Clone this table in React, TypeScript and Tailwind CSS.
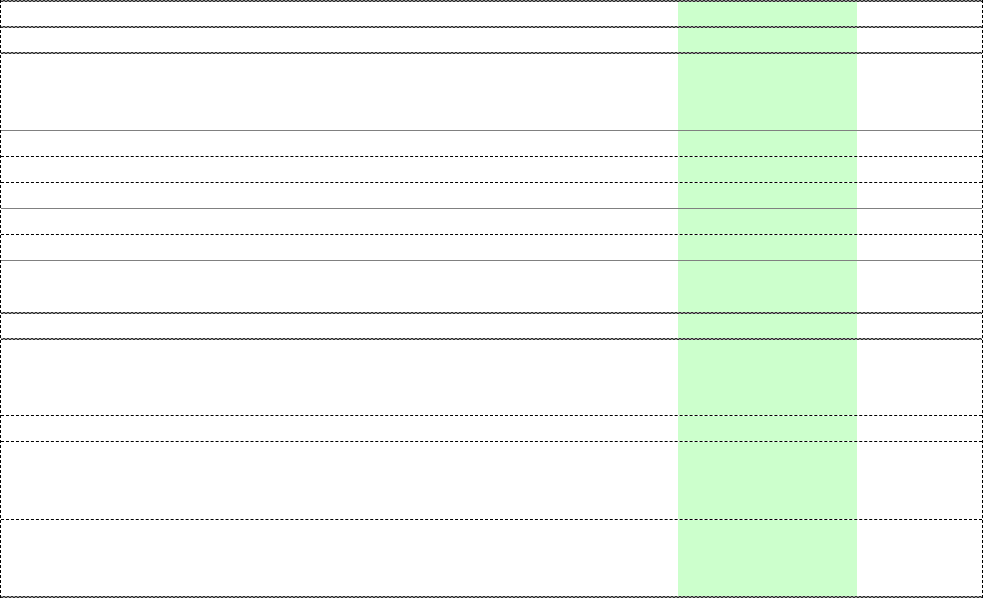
type Seg = { h: string; line?: string; strip?: boolean };

const segs: Seg[] = [
  { h: "h-[2px]", strip: true },
  { h: "h-[24px]" },
  { h: "h-[2px]", strip: true },
  { h: "h-[24px]" },
  { h: "h-[2px]", strip: true },
  { h: "h-[77px]", line: "border-b border-solid border-[#808080]" },
  { h: "h-[26px]", line: "border-b border-dashed border-black" },
  { h: "h-[26px]", line: "border-b border-dashed border-black" },
  { h: "h-[26px]", line: "border-b border-solid border-[#808080]" },
  { h: "h-[26px]", line: "border-b border-dashed border-black" },
  { h: "h-[26px]", line: "border-b border-solid border-[#808080]" },
  { h: "h-[51px]" },
  { h: "h-[2px]", strip: true },
  { h: "h-[24px]" },
  { h: "h-[2px]", strip: true },
  { h: "h-[76px]", line: "border-b border-dashed border-black" },
  { h: "h-[26px]", line: "border-b border-dashed border-black" },
  { h: "h-[78px]", line: "border-b border-dashed border-black" },
  { h: "h-[76px]" },
  { h: "h-[2px]", strip: true },
];

export default function App() {
  return (
    <div className="w-[983px] h-[598px] bg-white border-x border-dashed border-black flex flex-col overflow-hidden">
      {segs.map((s, i) =>
        s.strip ? (
          <div
            key={i}
            className="h-[2px] shrink-0 bg-[repeating-conic-gradient(#2a2a2a_0_25%,#9a9a9a_0_50%)] bg-[length:4px_2px]"
          />
        ) : (
          <div key={i} className={`flex shrink-0 box-border ${s.h} ${s.line ?? ""}`}>
            <div className="w-[677px] shrink-0" />
            <div className="w-[179px] shrink-0 bg-[#ccffcc]" />
            <div className="flex-1" />
          </div>
        )
      )}
    </div>
  );
}
